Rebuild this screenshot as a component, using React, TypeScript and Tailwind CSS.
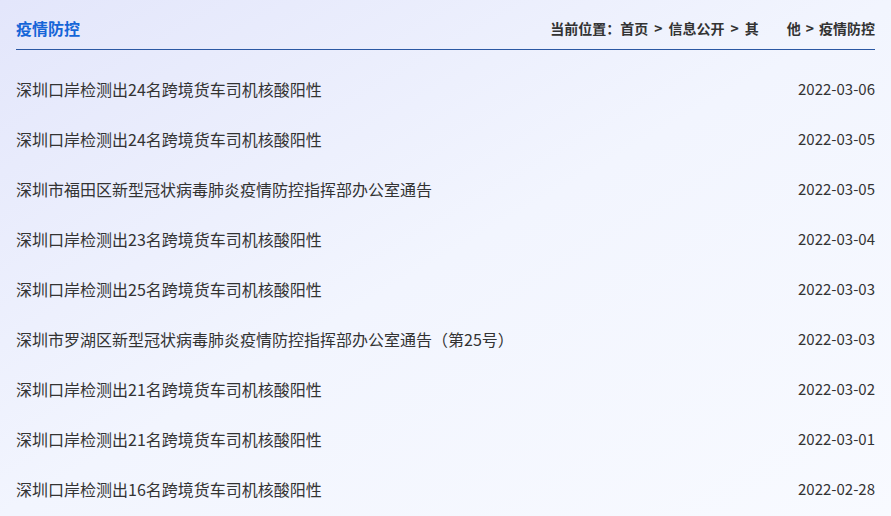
import React from 'react';

const items = [
  { title: '深圳口岸检测出24名跨境货车司机核酸阳性', date: '2022-03-06' },
  { title: '深圳口岸检测出24名跨境货车司机核酸阳性', date: '2022-03-05' },
  { title: '深圳市福田区新型冠状病毒肺炎疫情防控指挥部办公室通告', date: '2022-03-05' },
  { title: '深圳口岸检测出23名跨境货车司机核酸阳性', date: '2022-03-04' },
  { title: '深圳口岸检测出25名跨境货车司机核酸阳性', date: '2022-03-03' },
  { title: '深圳市罗湖区新型冠状病毒肺炎疫情防控指挥部办公室通告（第25号）', date: '2022-03-03' },
  { title: '深圳口岸检测出21名跨境货车司机核酸阳性', date: '2022-03-02' },
  { title: '深圳口岸检测出21名跨境货车司机核酸阳性', date: '2022-03-01' },
  { title: '深圳口岸检测出16名跨境货车司机核酸阳性', date: '2022-02-28' },
];

const Sep = () => <span className="mx-[6px]">&gt;</span>;

export default function App() {
  return (
    <div
      className="w-[891px] h-[516px] overflow-hidden bg-gradient-to-br from-[#e3e6fb] via-[#f2f5fe] to-[#f8faff] px-4"
      style={{ fontFamily: '"Noto Sans CJK SC", "Noto Sans", sans-serif' }}
    >
      {/* Header */}
      <div className="flex items-center justify-between h-[50px] pt-[6px] border-b border-[#2b58a3]">
        <h1 className="text-[16px] font-bold text-[#1565d8] leading-none">疫情防控</h1>
        <div className="text-[14px] font-bold text-[#333] leading-none flex items-center">
          <span>当前位置：首页</span>
          <Sep />
          <span>信息公开</span>
          <Sep />
          <span>其</span>
          <span className="inline-block w-[28px]" />
          <span>他</span>
          <span className="mx-[5px]">&gt;</span>
          <span>疫情防控</span>
        </div>
      </div>

      {/* List */}
      <ul className="pt-[14px]">
        {items.map((it, i) => (
          <li key={i} className="flex items-center justify-between h-[50px] text-[#333]">
            <span className="text-[16px]">{it.title}</span>
            <span className="text-[15px]">{it.date}</span>
          </li>
        ))}
      </ul>
    </div>
  );
}
